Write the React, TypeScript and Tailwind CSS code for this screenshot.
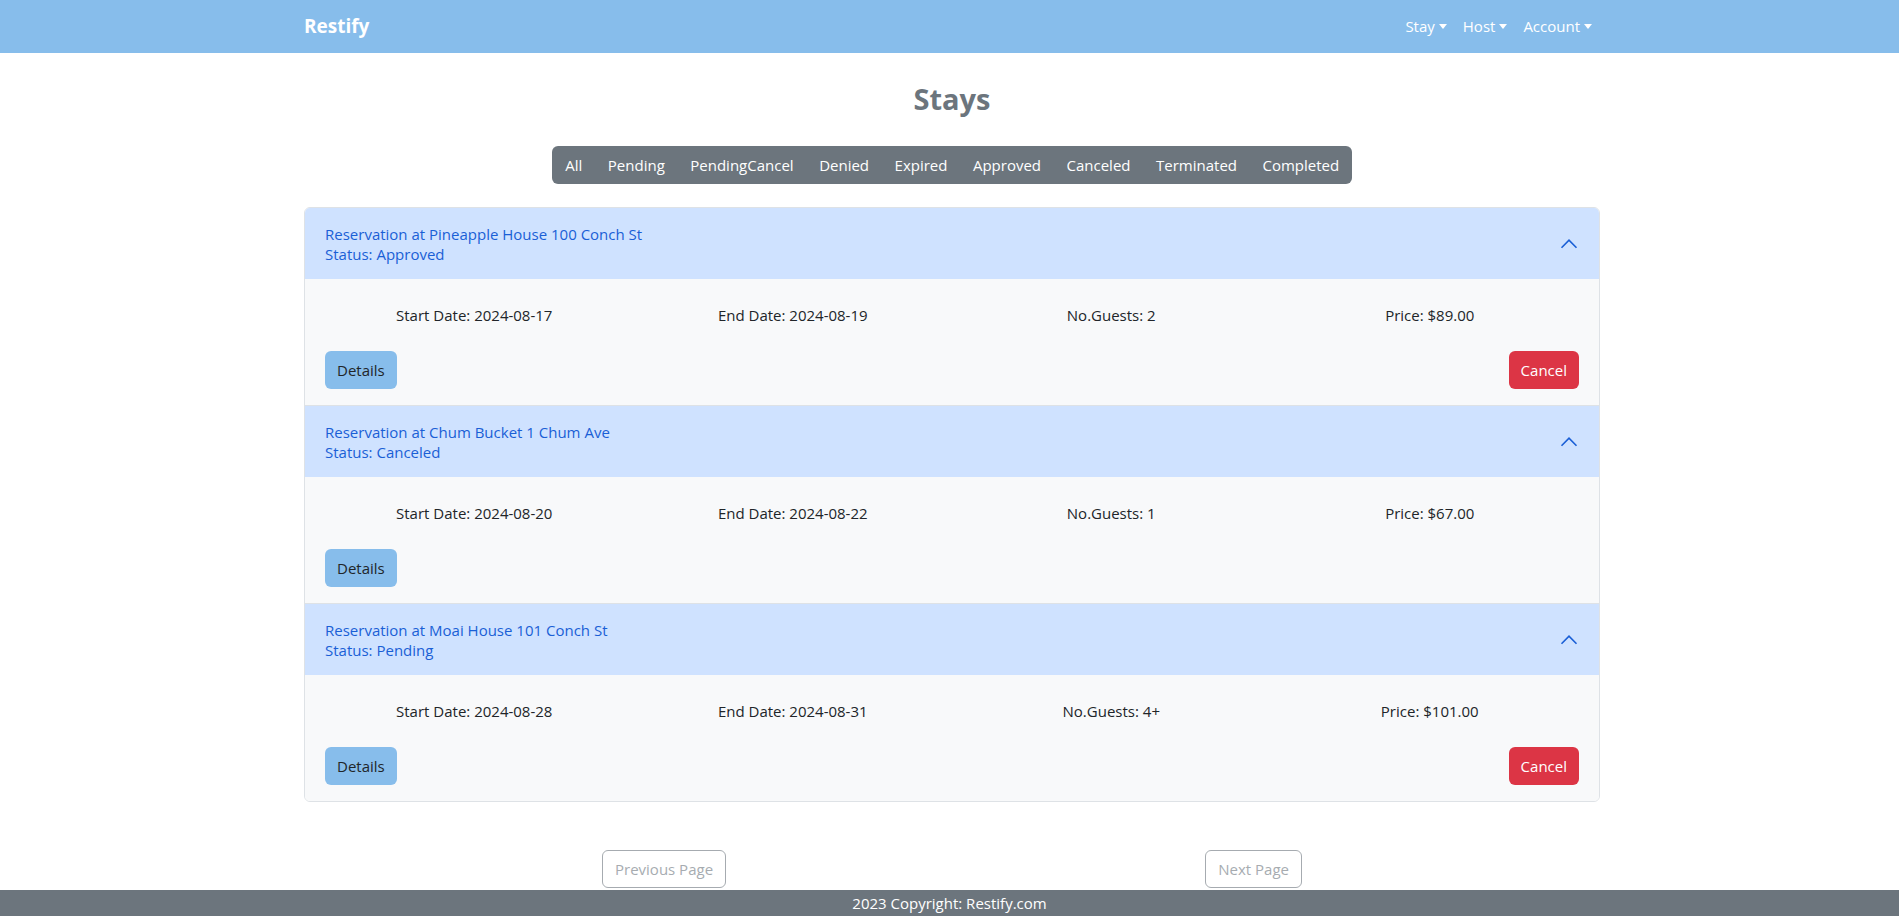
import React from 'react';

const filters = ['All', 'Pending', 'PendingCancel', 'Denied', 'Expired', 'Approved', 'Canceled', 'Terminated', 'Completed'];

const stays = [
  { place: 'Pineapple House 100 Conch St', status: 'Approved', start: '2024-08-17', end: '2024-08-19', guests: '2', price: '$89.00', cancel: true },
  { place: 'Chum Bucket 1 Chum Ave', status: 'Canceled', start: '2024-08-20', end: '2024-08-22', guests: '1', price: '$67.00', cancel: false },
  { place: 'Moai House 101 Conch St', status: 'Pending', start: '2024-08-28', end: '2024-08-31', guests: '4+', price: '$101.00', cancel: true },
];

function Caret() {
  return <span className="ml-[4px] inline-block align-[3px] border-x-[4px] border-t-[5px] border-x-transparent border-t-white" />;
}

function Chevron() {
  return (
    <svg width="20" height="20" viewBox="0 0 16 16" fill="none" className="text-[#1a5fd6]">
      <path d="M2 11L8 5L14 11" stroke="currentColor" strokeWidth="1.3" />
    </svg>
  );
}

export default function App() {
  return (
    <div className="bg-white text-[#212529] font-['Open_Sans',sans-serif] text-[15px]">
      {/* Navbar */}
      <nav className="h-[53px] bg-[#87bdeb]">
        <div className="w-[1301px] mx-auto pl-[5px] h-full flex items-center justify-between">
          <span className="text-[19px] font-bold text-white">Restify</span>
          <div className="flex items-center text-white pr-2">
            <span className="px-2">Stay<Caret /></span>
            <span className="px-2">Host<Caret /></span>
            <span className="pl-2">Account<Caret /></span>
          </div>
        </div>
      </nav>

      <div className="w-[1301px] mx-auto pl-[5px]">
        <h1 className="mt-[27px] text-center text-[29px] leading-[38px] font-bold text-[#6c757d]">Stays</h1>

        <div className="mt-[28px] flex justify-center">
          <div className="flex rounded-[6px] bg-[#6c757d] overflow-hidden">
            {filters.map(f => (
              <span key={f} className="pl-[13px] pr-[12.5px] h-[38px] leading-[38px] text-white">{f}</span>
            ))}
          </div>
        </div>

        {/* Reservations */}
        <div className="mt-[23px] border border-[#dee2e6] rounded-[6px] overflow-hidden">
          {stays.map((s, i) => (
            <div key={s.place} className={i > 0 ? 'border-t border-[#dee2e6]' : ''}>
              <div className="bg-[#cfe2ff] px-5 pt-4 pb-[15px] flex items-center justify-between text-[#1a5fd6] leading-[20px]">
                <div>
                  <p>Reservation at {s.place}</p>
                  <p>Status: {s.status}</p>
                </div>
                <Chevron />
              </div>
              <div className="bg-[#f8f9fa] px-5 pt-6 pb-4">
                <div className="mx-[-10px] grid grid-cols-4 text-center leading-[24px]">
                  <span>Start Date: {s.start}</span>
                  <span>End Date: {s.end}</span>
                  <span>No.Guests: {s.guests}</span>
                  <span>Price: {s.price}</span>
                </div>
                <div className="mt-6 flex justify-between">
                  <button className="h-[38px] px-3 rounded-[6px] bg-[#87bdeb] text-[#212529]">Details</button>
                  {s.cancel && (
                    <button className="h-[38px] px-3 rounded-[6px] bg-[#dc3545] text-white">Cancel</button>
                  )}
                </div>
              </div>
            </div>
          ))}
        </div>

        {/* Pagination */}
        <div className="mt-[48px] w-[700px] mx-auto flex justify-between">
          <button className="h-[38px] px-3 rounded-[6px] border border-[#6c757d] text-[#6c757d] opacity-60">Previous Page</button>
          <button className="h-[38px] px-3 rounded-[6px] border border-[#6c757d] text-[#6c757d] opacity-60">Next Page</button>
        </div>
      </div>

      <footer className="mt-[2px] h-[26px] bg-[#6c757d] text-white text-center leading-[26px]">
        2023 Copyright: Restify.com
      </footer>
    </div>
  );
}
